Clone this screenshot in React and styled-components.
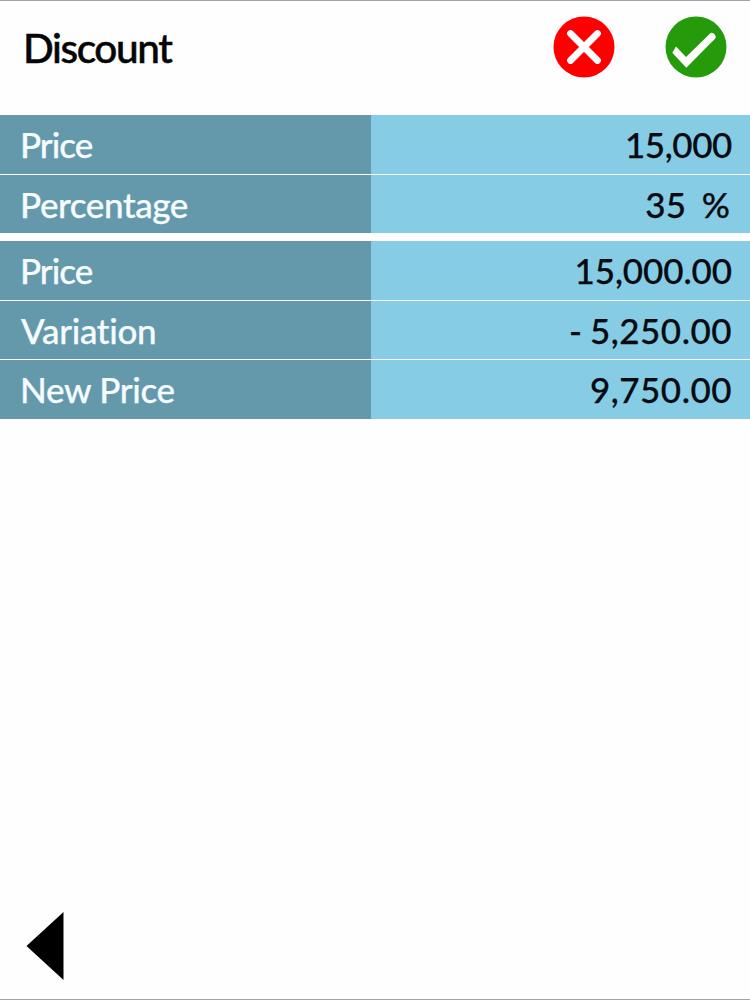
import React from 'react'
import styled, { createGlobalStyle } from 'styled-components'

const GlobalStyle = createGlobalStyle`
  * {
    box-sizing: border-box;
  }

  body {
    margin: 0;
    background: #fefefe;
    font-family: Lato, 'Liberation Sans', sans-serif;
    font-weight: 500;
  }
`

const Screen = styled.div`
  display: flex;
  flex-direction: column;
  height: 1000px;
  border-top: 1px solid #a8a3a5;
  border-bottom: 1px solid #a5a5a5;
`

const Header = styled.header`
  display: flex;
  align-items: flex-start;
  height: 114px;
  padding: 15px 23px 0 23px;
`

const Title = styled.h1`
  flex: 1;
  margin: 7px 0 0;
  color: #050505;
  font-size: 40.5px;
  font-weight: 500;
  line-height: 50px;
  letter-spacing: -1.4px;
  -webkit-text-stroke: 0.5px currentColor;
`

const Actions = styled.div`
  display: flex;
  gap: 50px;
`

const IconButton = styled.button`
  width: 62px;
  height: 62px;
  padding: 0;
  border: 0;
  background: none;
  cursor: pointer;

  svg {
    display: block;
  }
`

const Table = styled.section`
  display: flex;
  flex-direction: column;
  gap: 1px;
  margin-bottom: ${(props) => props.$after || 0}px;
`

const Row = styled.div`
  display: grid;
  grid-template-columns: 371px 1fr;
  height: ${(props) => props.$height}px;
  font-size: 35px;
  line-height: 58px;
  white-space: pre;
  -webkit-text-stroke: 0.25px currentColor;
`

const Label = styled.div`
  padding-left: ${(props) => props.$indent}px;
  background: #6499ac;
  color: #f6fcff;
  letter-spacing: ${(props) => props.$spacing}px;
`

const Value = styled.div`
  padding-right: ${(props) => props.$inset || 18}px;
  background: #87cce5;
  color: #050b10;
  text-align: right;
  letter-spacing: ${(props) => props.$spacing}px;
  word-spacing: ${(props) => props.$gap || 0}px;
`

const Footer = styled.footer`
  margin-top: auto;
  padding: 0 0 18px 26px;
`

const BackLink = styled.a`
  display: block;
  width: 38px;
  height: 70px;
  cursor: pointer;

  svg {
    display: block;
  }
`

const inputs = [
  { label: 'Price', value: '15,000', height: 59, indent: 20, labelSpacing: -1, valueSpacing: -0.4 },
  {
    label: 'Percentage',
    value: '35 %',
    height: 58,
    indent: 20,
    labelSpacing: -0.4,
    valueSpacing: 0,
    gap: 7,
    inset: 20
  }
]

const results = [
  { label: 'Price', value: '15,000.00', height: 59, indent: 20, labelSpacing: -1, valueSpacing: -0.1 },
  {
    label: 'Variation',
    value: '- 5,250.00',
    height: 58,
    indent: 21,
    labelSpacing: -0.3,
    valueSpacing: 0.5,
    gap: -2
  },
  { label: 'New Price', value: '9,750.00', height: 59, indent: 20, labelSpacing: -0.3, valueSpacing: 0.5 }
]

function CancelIcon() {
  return (
    <svg width="62" height="62" viewBox="0 0 62 62">
      <circle cx="31" cy="31" r="30.5" fill="#fe0000" />
      <path
        d="M17.5 17.5L44.5 44.5M44.5 17.5L17.5 44.5"
        stroke="#fff"
        strokeWidth="6.8"
        strokeLinecap="round"
      />
    </svg>
  )
}

function ConfirmIcon() {
  return (
    <svg width="62" height="62" viewBox="0 0 62 62">
      <circle cx="31" cy="31" r="30.5" fill="#259b0b" />
      <path
        d="M11 30.5L7.3 36.8L21.3 51.8L50 22.8Q51.5 20.8 49.8 18.6Q47.7 16 45.6 17L21 41Z"
        fill="#fff"
      />
    </svg>
  )
}

function Rows({ items, after }) {
  return (
    <Table $after={after}>
      {items.map((item) => (
        <Row key={item.label} $height={item.height}>
          <Label $indent={item.indent} $spacing={item.labelSpacing}>
            {item.label}
          </Label>
          <Value $spacing={item.valueSpacing} $gap={item.gap} $inset={item.inset}>
            {item.value}
          </Value>
        </Row>
      ))}
    </Table>
  )
}

export default function App() {
  return (
    <Screen>
      <GlobalStyle />
      <Header>
        <Title>Discount</Title>
        <Actions>
          <IconButton aria-label="Cancel">
            <CancelIcon />
          </IconButton>
          <IconButton aria-label="Confirm">
            <ConfirmIcon />
          </IconButton>
        </Actions>
      </Header>
      <Rows items={inputs} after={8} />
      <Rows items={results} />
      <Footer>
        <BackLink aria-label="Back">
          <svg width="38" height="70" viewBox="0 0 38 70">
            <path d="M0.5 35L37.5 1V69Z" fill="#000" />
          </svg>
        </BackLink>
      </Footer>
    </Screen>
  )
}
